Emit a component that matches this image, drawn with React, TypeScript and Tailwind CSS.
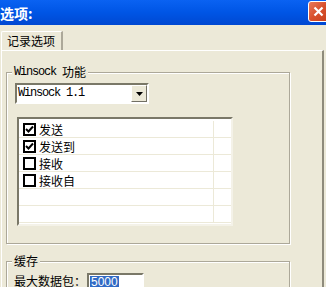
import React from 'react';

const ITEMS = [
  { id: 1, label: '发送', checked: true },
  { id: 2, label: '发送到', checked: true },
  { id: 3, label: '接收', checked: false },
  { id: 4, label: '接收自', checked: false },
  { id: 5, label: '', checked: null },
  { id: 6, label: '', checked: null },
];

const cjk = { fontFamily: '"Noto Sans CJK SC", "Liberation Sans", sans-serif' };
const mono = { fontFamily: '"Liberation Mono", "Noto Sans CJK SC", monospace' };

function CheckBox({ checked }: { checked: boolean }) {
  return (
    <span className="w-[13px] h-[13px] border-2 border-black bg-white flex items-center justify-center shrink-0">
      {checked && (
        <svg width="9" height="9" viewBox="0 0 9 9">
          <path d="M1 4 L3.5 6.5 L8 1.5" stroke="black" strokeWidth="2" fill="none" />
        </svg>
      )}
    </span>
  );
}

function GroupBox({ title, children, className }: { title: React.ReactNode; children: React.ReactNode; className?: string }) {
  return (
    <div className={`relative border border-[#aca899] shadow-[inset_1px_1px_0_white,1px_1px_0_white] ${className ?? ''}`}>
      <span className="absolute left-[5px] -top-[8px] px-[2px] bg-[#ece9d8] leading-[14px] text-[12px] text-black flex whitespace-pre">{title}</span>
      {children}
    </div>
  );
}

export default function App() {
  return (
    <div className="w-[326px] h-[287px] overflow-hidden bg-[#ece9d8] text-black" style={cjk}>
      {/* title bar */}
      <div className="h-[25px] flex items-center justify-between bg-gradient-to-b from-[#0a62f2] via-[#0055e5] to-[#0048d2]">
        <span className="text-white font-bold text-[14px] leading-none">选项:</span>
        <button className="w-[21px] h-[21px] mr-[-3px] mt-[-2px] rounded-[3px] border border-white bg-gradient-to-br from-[#e8785a] via-[#d8502c] to-[#c8401c] flex items-center justify-center">
          <svg width="11" height="11" viewBox="0 0 11 11">
            <path d="M1.5 1.5 L9.5 9.5 M9.5 1.5 L1.5 9.5" stroke="white" strokeWidth="2.2" />
          </svg>
        </button>
      </div>

      <div className="ml-[1px] mt-[6px] mr-[2px]">
        {/* tab */}
        <div className="flex">
          <div className="w-[62px] h-[19px] border-l border-t border-white border-r-2 border-r-[#aca899] rounded-tl-[2px] text-[12px] leading-[16px] pl-[5px] pt-[1px]">
            记录选项
          </div>
        </div>

        {/* tab panel */}
        <div className="border-t border-l border-white border-r-2 border-r-[#8e8b7c] h-[240px]">
          <div className="pl-[4px] pt-[21px] pr-[32px]">
            <GroupBox
              title={
                <>
                  <span style={mono} className="tracking-[-1.2px]">{'Winsock\u00a0'}</span>
                  <span>功能</span>
                </>
              }
            >
              <div className="pt-[10px] pl-[8px] pb-[17px]">
                {/* combobox */}
                <div className="w-[134px] h-[21px] flex bg-white border-2 border-t-[#7a7868] border-l-[#7a7868] border-b-white border-r-white">
                  <span style={mono} className="flex-1 text-[12px] leading-[17px] tracking-[-1.2px] pl-[1px]">
                    Winsock 1.1
                  </span>
                  <span className="w-[16px] h-[17px] bg-[#ece9d8] border border-t-white border-l-white border-b-[#716f64] border-r-[#716f64] flex items-center justify-center">
                    <svg width="7" height="4" viewBox="0 0 7 4">
                      <path d="M0 0 H7 L3.5 4 Z" fill="black" />
                    </svg>
                  </span>
                </div>

                {/* list */}
                <div className="ml-[2px] mt-[13px] w-[216px] h-[109px] bg-white border-2 border-t-[#7a7868] border-l-[#7a7868] border-b-[#f4f2e8] border-r-[#f4f2e8] pt-[2px]">
                  {ITEMS.map(({ id, label, checked }) => (
                    <div key={id} className="h-[17px] flex border-b border-[#ece9d8]">
                      <div className="w-[195px] border-r border-[#ece9d8] flex items-start pl-[4px] pt-[2px] gap-[3px]">
                        {checked !== null && <CheckBox checked={checked} />}
                        <span className="text-[12px] leading-[13px]">{label}</span>
                      </div>
                    </div>
                  ))}
                </div>
              </div>
            </GroupBox>

            <GroupBox title={<span>缓存</span>} className="mt-[17px]">
              <div className="pt-[11px] pl-[7px] pb-[6px] flex items-start">
                <span className="text-[12px] leading-[14px] w-[73px] pt-[1px]">最大数据包：</span>
                <div className="w-[57px] h-[20px] flex items-start bg-white border-2 border-t-[#7a7868] border-l-[#7a7868] border-b-white border-r-white pl-[1px] pt-[1px]">
                  <span className="bg-[#316ac5] text-white text-[12px] leading-[13px] px-[1px]" style={{ fontFamily: '"Liberation Sans", sans-serif' }}>
                    5000
                  </span>
                </div>
              </div>
            </GroupBox>
          </div>
        </div>
      </div>
    </div>
  );
}
